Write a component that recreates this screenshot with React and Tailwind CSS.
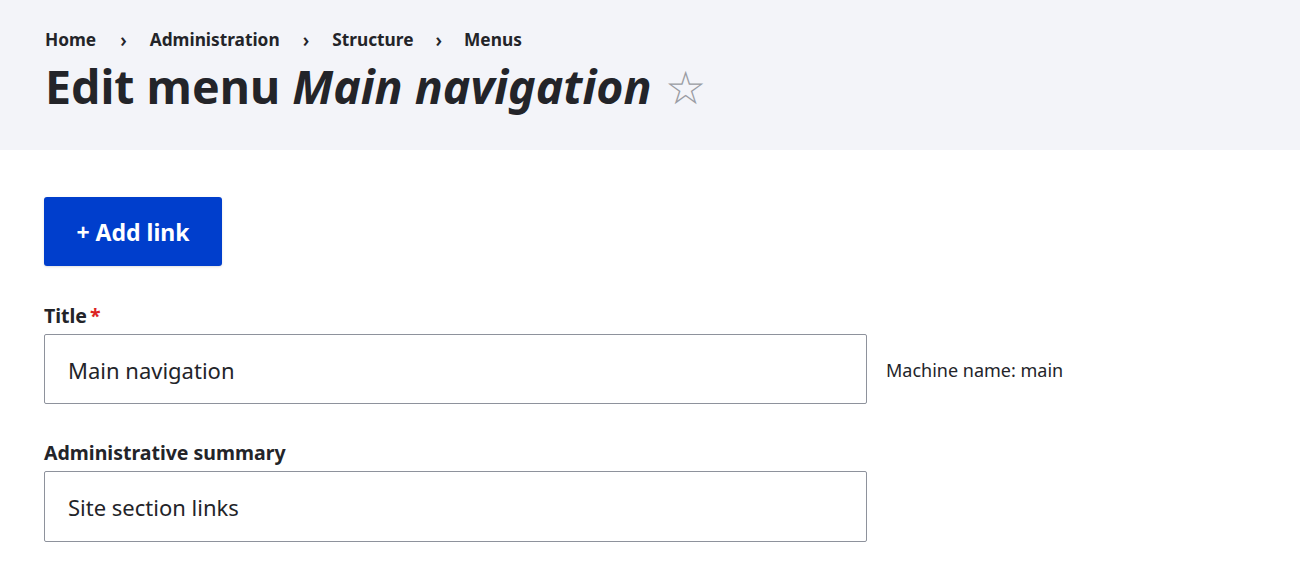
import React from "react";

function App() {
  return (
    <div className="min-h-screen bg-white text-[#232429]" style={{ fontFamily: '"Noto Sans", "Open Sans", sans-serif' }}>
      <div className="h-[150px] bg-[#f3f4f9] px-[45px] pt-[27px]">
        <nav className="flex items-center text-[17.3px] font-bold leading-[26px]">
          <span>Home</span>
          <span className="ml-[24px] mr-[23px] text-[19px] font-semibold">›</span>
          <span>Administration</span>
          <span className="mx-[23px] text-[19px] font-semibold">›</span>
          <span>Structure</span>
          <span className="mx-[22px] text-[19px] font-semibold">›</span>
          <span>Menus</span>
        </nav>
        <h1 className="mt-[5px] flex items-center text-[46.5px] font-bold leading-[56px]">
          <span>Edit menu <em className="italic">Main navigation</em></span>
          <span className="ml-[13px] text-[46px] font-normal leading-none text-[#9a9ca3]">☆</span>
        </h1>
      </div>

      <div className="px-[44px] pt-[47px]">
        <button className="h-[69px] w-[178px] rounded-[3px] bg-[#003ecc] pt-[2px] text-[23px] font-bold text-white shadow-sm">
          + Add link
        </button>

        <div className="mt-[38px]">
          <label className="block text-[19.5px] font-bold leading-[24px]">
            Title<span className="ml-[3px] text-[#dc2323]">*</span>
          </label>
          <div className="mt-[6px] flex items-center">
            <div className="flex h-[70px] w-[823px] items-center rounded-[2px] border border-[#8e929c] px-[23px] pt-[2px] text-[22px]">
              Main navigation
            </div>
            <span className="ml-[19px] pt-[2px] text-[18px]">Machine name: main</span>
          </div>
        </div>

        <div className="mt-[37px]">
          <label className="block text-[19.5px] font-bold leading-[24px]">Administrative summary</label>
          <div className="mt-[6px] flex h-[71px] w-[823px] items-center rounded-[2px] border border-[#8e929c] px-[23px] pt-[2px] text-[22px]">
            Site section links
          </div>
        </div>
      </div>
    </div>
  );
}

export default App;
